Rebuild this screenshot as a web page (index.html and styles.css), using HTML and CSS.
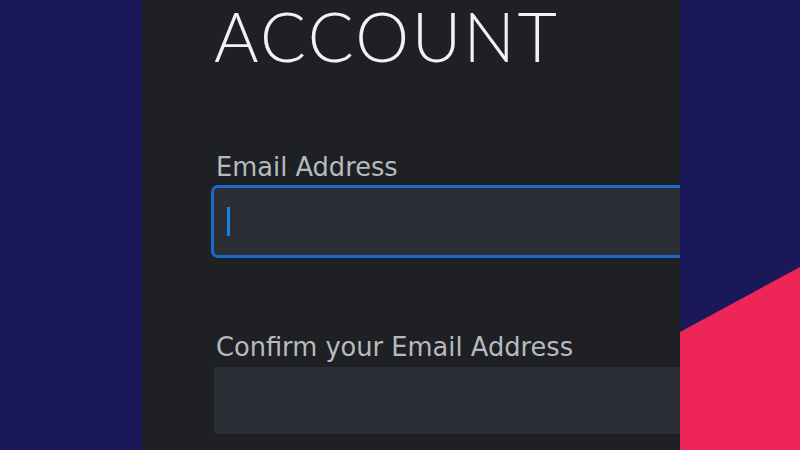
FILE: index.html
```html
<!DOCTYPE html>
<html lang="en">
<head>
    <meta charset="UTF-8">
    <meta name="viewport" content="width=device-width, initial-scale=1.0">
    <title>Create Account</title>
    <link rel="stylesheet" href="styles.css">
</head>
<body>
    <div class="side-left"></div>
    <div class="panel">
        <h1 class="title">ACCOUNT</h1>
        <label class="label">Email Address</label>
        <div class="field focused"><span class="caret"></span></div>
        <label class="label second">Confirm your Email Address</label>
        <div class="field"></div>
    </div>
    <div class="side-right">
        <svg class="shape" viewBox="0 0 120 450" preserveAspectRatio="none">
            <polygon points="0,332 120,267 120,450 0,450" fill="#ed2657"/>
        </svg>
    </div>
</body>
</html>
```

FILE: styles.css
```css
body {
    margin: 0;
    display: flex;
    height: 100vh;
    background-color: #1a1858; /* navy backdrop */
    font-family: "DejaVu Sans", sans-serif;
    overflow: hidden;
}

.side-left {
    width: 142px;
    flex-shrink: 0;
}

.panel {
    width: 538px;
    flex-shrink: 0;
    background-color: #1e2024;
    padding-left: 72px;
    box-sizing: border-box;
    overflow: hidden;
}

.title {
    margin: 0;
    font-family: Lato, sans-serif;
    font-weight: 300;
    font-size: 68px;
    line-height: 72px;
    letter-spacing: 2.5px;
    color: #f2f2f2;
}

.label {
    display: block;
    margin-top: 78px;
    margin-bottom: 4px;
    padding-left: 2px;
    font-size: 25.7px;
    line-height: 34px;
    color: #b7babe;
}

.label.second {
    margin-top: 75px;
    margin-bottom: 3px;
}

.field {
    width: 560px;
    height: 67px;
    background-color: #2b2e35;
    border-radius: 4px;
    display: flex;
    align-items: center;
    padding-left: 13px;
    box-sizing: border-box;
}

.field.focused {
    box-shadow: 0 0 0 3px #1b6ac9;
    width: 600px;
}

.caret {
    width: 3px;
    height: 29px;
    background-color: #1a7fe6;
}

.side-right {
    flex: 1;
    position: relative;
}

.shape {
    display: block;
    width: 100%;
    height: 100%;
}
```
